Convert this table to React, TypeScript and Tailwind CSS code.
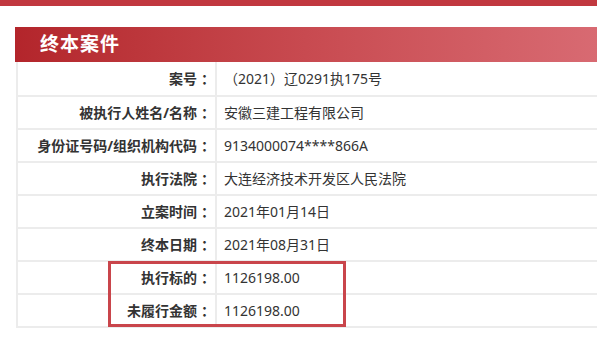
const rows: [string, string][] = [
  ['案号', '（2021）辽0291执175号'],
  ['被执行人姓名/名称', '安徽三建工程有限公司'],
  ['身份证号码/组织机构代码', '9134000074****866A'],
  ['执行法院', '大连经济技术开发区人民法院'],
  ['立案时间', '2021年01月14日'],
  ['终本日期', '2021年08月31日'],
];

const money: [string, string][] = [
  ['执行标的', '1126198.00'],
  ['未履行金额', '1126198.00'],
];

function Row({ label, value, first }: { label: string; value: string; first?: boolean }) {
  return (
    <div className={`flex border-b-2 border-[#ececec] ${first ? 'h-[35px]' : 'h-[33px]'}`}>
      <div className="w-[197px] shrink-0 flex items-center justify-end font-bold text-[#333]">
        {label}
        <span className="ml-[4px]">：</span>
      </div>
      <div className="w-[2px] bg-[#ececec]" />
      <div className="flex items-center pl-[7px] text-[#333]">{value}</div>
    </div>
  );
}

export default function App() {
  return (
    <div
      className="w-[597px] h-[341px] overflow-hidden bg-white text-[14px]"
      style={{ fontFamily: '"Noto Sans", "Noto Sans CJK SC", sans-serif' }}
    >
      <div className="h-[6px] bg-[#c1383f]" />
      <div className="pt-[21px] pl-[15px]">
        <div className="h-[35px] flex items-center pl-[25px] bg-gradient-to-r from-[#b3252b] via-[#c84a50] to-[#d86a72]">
          <span className="text-white font-bold text-[19px] tracking-[1px]">终本案件</span>
        </div>
        <div className="ml-px border-l-2 border-[#ececec]">
          {rows.map(([l, v], i) => (
            <Row key={l} label={l} value={v} first={i === 0} />
          ))}
          <div className="relative">
            {money.map(([l, v]) => (
              <Row key={l} label={l} value={v} />
            ))}
            <div className="absolute left-[90px] top-[-1px] w-[238px] h-[66px] border-[3px] border-[#c9454b]" />
          </div>
        </div>
      </div>
    </div>
  );
}
